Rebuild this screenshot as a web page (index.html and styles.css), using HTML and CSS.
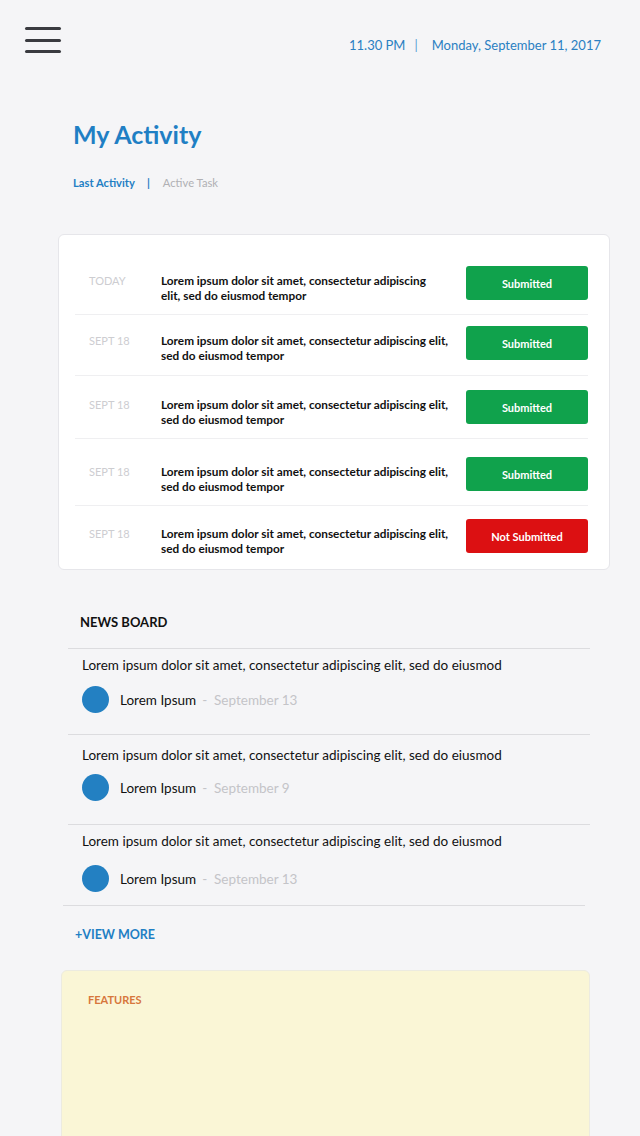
FILE: index.html
```html
<!DOCTYPE html>
<html>
<head>
<meta charset="utf-8">
<link rel="stylesheet" href="styles.css">
</head>
<body>
<div class="page">
  <header class="topbar">
    <div class="burger"><span></span><span></span><span></span></div>
    <div class="clock"><span>11.30 PM</span><span class="bar">|</span><span>Monday, September 11, 2017</span></div>
  </header>

  <section class="heading">
    <h1>My Activity</h1>
    <nav class="tabs"><span class="tab active">Last Activity</span><span class="tabsep">|</span><span class="tab">Active Task</span></nav>
  </section>

  <section class="card">
    <div class="row">
      <div class="date">TODAY</div>
      <div class="desc narrow">Lorem ipsum dolor sit amet, consectetur adipiscing elit, sed do eiusmod tempor</div>
      <div class="status ok">Submitted</div>
    </div>
    <div class="row">
      <div class="date">SEPT 18</div>
      <div class="desc">Lorem ipsum dolor sit amet, consectetur adipiscing elit, sed do eiusmod tempor</div>
      <div class="status ok">Submitted</div>
    </div>
    <div class="row">
      <div class="date">SEPT 18</div>
      <div class="desc">Lorem ipsum dolor sit amet, consectetur adipiscing elit, sed do eiusmod tempor</div>
      <div class="status ok">Submitted</div>
    </div>
    <div class="row">
      <div class="date">SEPT 18</div>
      <div class="desc">Lorem ipsum dolor sit amet, consectetur adipiscing elit, sed do eiusmod tempor</div>
      <div class="status ok">Submitted</div>
    </div>
    <div class="row">
      <div class="date">SEPT 18</div>
      <div class="desc">Lorem ipsum dolor sit amet, consectetur adipiscing elit, sed do eiusmod tempor</div>
      <div class="status bad">Not Submitted</div>
    </div>
  </section>

  <section class="news">
    <h2>NEWS BOARD</h2>
    <div class="item">
      <p>Lorem ipsum dolor sit amet, consectetur adipiscing elit, sed do eiusmod</p>
      <div class="meta"><span class="avatar"></span><span class="author">Lorem Ipsum</span><span class="when">-&nbsp; September 13</span></div>
    </div>
    <div class="item">
      <p>Lorem ipsum dolor sit amet, consectetur adipiscing elit, sed do eiusmod</p>
      <div class="meta"><span class="avatar"></span><span class="author">Lorem Ipsum</span><span class="when">-&nbsp; September 9</span></div>
    </div>
    <div class="item last">
      <p>Lorem ipsum dolor sit amet, consectetur adipiscing elit, sed do eiusmod</p>
      <div class="meta"><span class="avatar"></span><span class="author">Lorem Ipsum</span><span class="when">-&nbsp; September 13</span></div>
    </div>
    <a class="more">+VIEW MORE</a>
  </section>

  <section class="features">
    <h3>FEATURES</h3>
  </section>
</div>
</body>
</html>
```
FILE: styles.css
```css
* { box-sizing: border-box; }
html, body { margin: 0; padding: 0; }
body {
  background: #f5f5f7;
  font-family: "Lato", "Liberation Sans", sans-serif;
  color: #111;
  width: 640px;
  height: 1136px;
  overflow: hidden;
}

.topbar {
  display: flex;
  justify-content: space-between;
  align-items: flex-start;
  padding: 27px 39px 0 25px;
  height: 98px;
}
.burger { display: flex; flex-direction: column; gap: 8.5px; width: 36px; }
.burger span { display: block; height: 3px; background: #3a3b40; border-radius: 2px; }
.clock {
  color: #2a80c2;
  font-size: 13px;
  padding-top: 10px;
  display: flex;
}
.clock .bar { margin: 0 14px 0 9px; color: #5a9fd3; }

.heading { padding: 20px 0 0 73px; height: 136px; }
.heading h1 {
  margin: 0;
  font-size: 25px;
  font-weight: 700;
  color: #1f7fc4;
  line-height: 32px;
}
.tabs { margin-top: 26px; font-size: 11.2px; display: flex; align-items: center; }
.tab { color: #b0b0b4; }
.tab.active { color: #1f7fc4; font-weight: 700; }
.tabsep { color: #1f7fc4; margin: 0 13px 0 12px; font-weight: 700; }

.card {
  margin: 0 30px 0 58px;
  background: #fff;
  border: 1px solid #e6e6ea;
  border-radius: 6px;
  padding: 16px 21px 0 16px;
}
.row {
  display: flex;
  align-items: flex-start;
  border-bottom: 1px solid #efeff1;
}
.row:nth-child(1) { height: 64px; padding-top: 15px; }
.row:nth-child(2) { height: 61px; padding-top: 11px; }
.row:nth-child(3) { height: 63px; padding-top: 14px; }
.row:nth-child(4) { height: 67px; padding-top: 18px; }
.row:nth-child(5) { height: 63px; padding-top: 13px; border-bottom: none; }
.date {
  width: 86px;
  padding-left: 14px;
  padding-top: 7px;
  font-size: 11px;
  color: #cdcdd1;
  line-height: 15px;
}
.desc {
  width: 296px;
  font-size: 11.8px;
  font-weight: 700;
  line-height: 15px;
  padding-top: 7px;
  color: #111;
}
.desc.narrow { width: 275px; }
.status {
  margin-left: auto;
  width: 122px;
  height: 34px;
  border-radius: 3px;
  color: #fff;
  font-size: 11px;
  font-weight: 700;
  display: flex;
  align-items: center;
  justify-content: center;
}
.status.ok { background: #10a24c; }
.status.bad { background: #dc1012; }

.news { margin: 0 50px 0 63px; padding-top: 43px; }
.news h2 {
  margin: 0 0 0 5px;
  font-size: 13px;
  font-weight: 700;
  padding: 0 0 17px 12px;
  border-bottom: 1px solid #dcdcdf;
  line-height: 18px;
}
.item {
  border-bottom: 1px solid #dcdcdf;
  margin-left: 5px;
  padding-left: 14px;
}
.item:nth-of-type(1) { height: 86px; padding-top: 7px; }
.item:nth-of-type(2) { height: 90px; padding-top: 11px; }
.item:nth-of-type(3) { height: 81px; padding-top: 7px; }
.item.last { margin-left: 0; margin-right: 5px; padding-left: 19px; }
.item p { margin: 0; font-size: 13.5px; line-height: 18px; }
.meta { display: flex; align-items: center; margin-top: 12px; }
.item:nth-of-type(2) .meta { margin-top: 10px; }
.item:nth-of-type(3) .meta { margin-top: 15px; }
.avatar { width: 27px; height: 27px; border-radius: 50%; background: #2380c2; margin-right: 11px; }
.author { font-size: 13.5px; margin-right: 6px; }
.when { font-size: 13.5px; color: #c4c4c8; }
.more {
  display: block;
  margin-top: 21px;
  padding-left: 12px;
  font-size: 12.5px;
  font-weight: 700;
  color: #1f7fc4;
  line-height: 16px;
}

.features {
  margin: 27px 50px 0 61px;
  background: #faf6d6;
  border: 1px solid #ecebe0;
  border-radius: 6px;
  height: 200px;
  padding: 22px 26px;
}
.features h3 { margin: 0; font-size: 11px; font-weight: 700; color: #d7773d; }
```
